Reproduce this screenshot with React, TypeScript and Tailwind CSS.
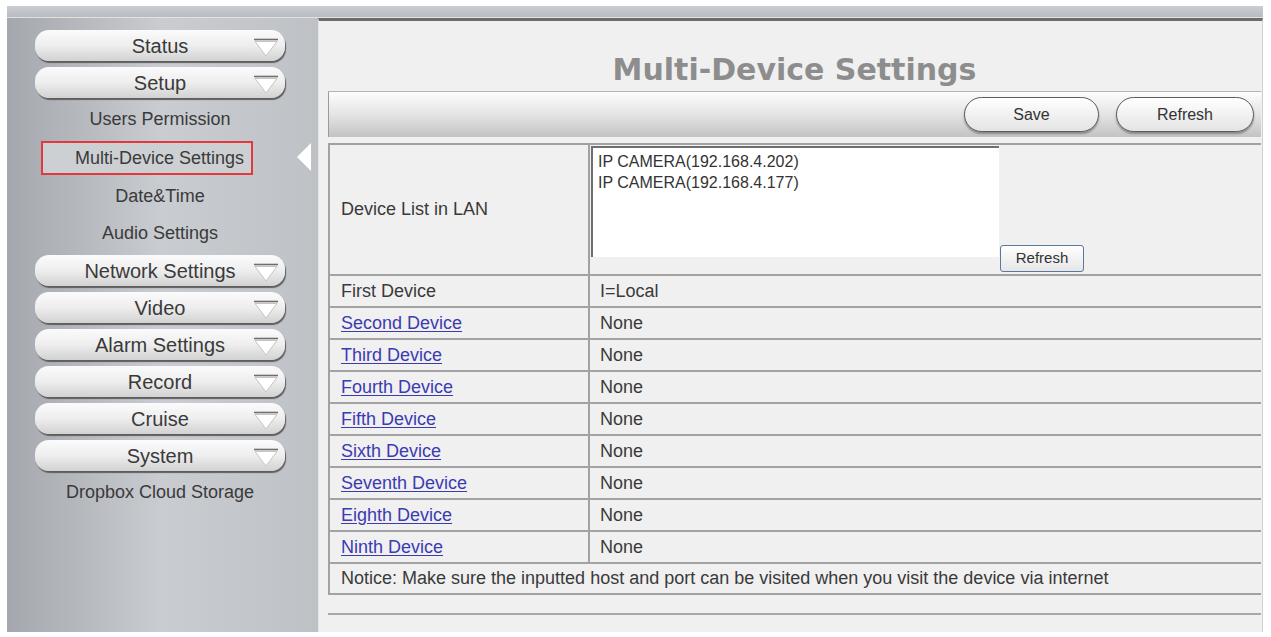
import React from 'react';

type MenuItem = { label: string; kind: 'button' | 'link' | 'active' };

const menu: MenuItem[] = [
  { label: 'Status', kind: 'button' },
  { label: 'Setup', kind: 'button' },
  { label: 'Users Permission', kind: 'link' },
  { label: 'Multi-Device Settings', kind: 'active' },
  { label: 'Date&Time', kind: 'link' },
  { label: 'Audio Settings', kind: 'link' },
  { label: 'Network Settings', kind: 'button' },
  { label: 'Video', kind: 'button' },
  { label: 'Alarm Settings', kind: 'button' },
  { label: 'Record', kind: 'button' },
  { label: 'Cruise', kind: 'button' },
  { label: 'System', kind: 'button' },
  { label: 'Dropbox Cloud Storage', kind: 'link' },
];

const devices = [
  { name: 'First Device', value: 'I=Local', link: false },
  { name: 'Second Device', value: 'None', link: true },
  { name: 'Third Device', value: 'None', link: true },
  { name: 'Fourth Device', value: 'None', link: true },
  { name: 'Fifth Device', value: 'None', link: true },
  { name: 'Sixth Device', value: 'None', link: true },
  { name: 'Seventh Device', value: 'None', link: true },
  { name: 'Eighth Device', value: 'None', link: true },
  { name: 'Ninth Device', value: 'None', link: true },
];

const DropArrow: React.FC = () => (
  <svg width="26" height="20" viewBox="0 0 26 20" className="absolute right-[6px] top-[8px]">
    <line x1="1" y1="1.5" x2="25" y2="1.5" stroke="#6e6e6e" strokeWidth="1.6" />
    <polygon points="2,3.5 24,3.5 13,18" fill="#ffffff" stroke="#c4c4c4" strokeWidth="1" />
  </svg>
);

const MenuButton: React.FC<{ label: string }> = ({ label }) => (
  <div className="relative w-full h-[31px] rounded-[14px] bg-linear-to-b from-[#fbfbfb] via-[#eeeeee] to-[#d2d2d2] shadow-[1px_2px_1px_#5e5e5e] flex items-center justify-center text-[20px] text-[#3a3a3a]">
    {label}
    <DropArrow />
  </div>
);

const Sidebar: React.FC = () => (
  <aside className="relative w-[311px] h-[614px] bg-linear-to-r from-[#a4a8ae] via-[#c9ccd0] to-[#bec1c5]">
    <div className="w-[250px] ml-[28px] pt-[9px] flex flex-col">
      {menu.map((item) => {
        if (item.kind === 'button') {
          return (
            <div key={item.label} className="h-[37px] flex items-center">
              <MenuButton label={item.label} />
            </div>
          );
        }
        if (item.kind === 'active') {
          return (
            <div key={item.label} className="h-[40px] flex items-center">
              <div className="ml-[6px] w-[212px] h-[34px] border-2 border-[#e23a3c] bg-[#cdd0d3] pl-[32px] flex items-center text-[18px] text-[#3a3a3a] whitespace-nowrap">
                {item.label}
              </div>
            </div>
          );
        }
        return (
          <div key={item.label} className="h-[37px] flex items-center justify-center text-[18px] text-[#3a3a3a] whitespace-nowrap">
            {item.label}
          </div>
        );
      })}
    </div>
    {/* selected indicator */}
    <svg width="14" height="28" viewBox="0 0 14 28" className="absolute left-[290px] top-[125px]">
      <polygon points="14,0 0,14 14,28" fill="#ffffff" />
    </svg>
  </aside>
);

const PillButton: React.FC<{ label: string; width: string }> = ({ label, width }) => (
  <button
    className={`${width} h-[35px] rounded-full border border-[#5a5a5a] bg-linear-to-b from-[#ffffff] to-[#e4e4e4] shadow-[0_2px_2px_#8a8a8a] text-[16px] text-[#333333]`}
  >
    {label}
  </button>
);

export default function App() {
  return (
    <div className="w-[1271px] h-[637px] bg-white overflow-hidden font-['Liberation_Sans',Arial,sans-serif]">
      <div className="ml-[7px] pt-[6px] w-[1256px] flex flex-col">
        {/* top bar */}
        <div className="h-[12px] bg-linear-to-b from-[#cacdd1] to-[#b8bbbf] border-b border-[#e2e2e2]" />

        <div className="flex">
          <Sidebar />

          <main className="w-[945px] h-[614px] bg-[#f0f0f0] border-t-[3px] border-[#6c6c6c] border-l border-r border-l-[#e4e4e4] border-r-[#d0d0d0] pl-[9px] pr-[1px]">
            {/* title */}
            <div className="h-[71px] border-b border-[#b4b4b4] flex justify-center pt-[31px]">
              <h1 className="font-['DejaVu_Sans',Verdana,sans-serif] font-bold text-[30px] leading-[35px] text-[#8d8d8d]">
                Multi-Device Settings
              </h1>
            </div>

            {/* toolbar */}
            <div className="h-[45px] bg-linear-to-b from-[#fdfdfd] via-[#e4e4e4] to-[#c3c3c3] border-l border-[#9a9a9a] flex items-center justify-end gap-[17px] pr-[7px]">
              <PillButton label="Save" width="w-[135px]" />
              <PillButton label="Refresh" width="w-[138px]" />
            </div>

            <div className="h-[6px]" />

            {/* table */}
            <div className="border-t-2 border-l-2 border-[#a2a2a2] text-[18px] text-[#3a3a3a]">
              <div className="flex h-[131px] border-b-2 border-[#a2a2a2]">
                <div className="w-[260px] border-r-2 border-[#a2a2a2] pl-[11px] flex items-center">
                  Device List in LAN
                </div>
                <div className="flex-1 flex">
                  <div className="w-[408px] h-[111px] ml-[1px] mt-[1px] bg-white border-t-2 border-l-2 border-[#6f6f6f] pl-[5px] pt-[3px] text-[16px] leading-[21px] text-[#333333]">
                    <div>IP CAMERA(192.168.4.202)</div>
                    <div>IP CAMERA(192.168.4.177)</div>
                  </div>
                  <button className="self-end mb-[2px] ml-[1px] w-[84px] h-[27px] rounded-[3px] border border-[#58799b] bg-linear-to-b from-[#ffffff] to-[#e6e6e6] text-[15px] text-[#333333]">
                    Refresh
                  </button>
                </div>
              </div>

              {devices.map((d) => (
                <div key={d.name} className="flex h-[32px] border-b-2 border-[#a2a2a2]">
                  <div className="w-[260px] border-r-2 border-[#a2a2a2] pl-[11px] flex items-center">
                    {d.link ? (
                      <a href="#" className="text-[#3b3bb2] underline underline-offset-2">
                        {d.name}
                      </a>
                    ) : (
                      d.name
                    )}
                  </div>
                  <div className="flex-1 pl-[10px] flex items-center">{d.value}</div>
                </div>
              ))}

              <div className="h-[31px] border-b-2 border-[#a2a2a2] pl-[11px] flex items-center">
                Notice: Make sure the inputted host and port can be visited when you visit the device via internet
              </div>
            </div>

            <div className="h-[20px] border-b-2 border-[#a8a8a8]" />
          </main>
        </div>
      </div>
    </div>
  );
}
